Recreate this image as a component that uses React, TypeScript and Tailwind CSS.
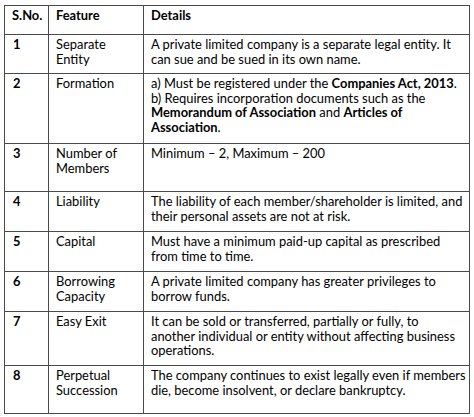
import React from "react";

type Row = { n: string; f: React.ReactNode; d: React.ReactNode; h: number };

const rows: Row[] = [
  {
    n: "1",
    f: <>Separate<br />Entity</>,
    d: <>A private limited company is a separate legal entity. It<br />can sue and be sued in its own name.</>,
    h: 39,
  },
  {
    n: "2",
    f: "Formation",
    d: (
      <>
        a) Must be registered under the <b>Companies Act, 2013</b>.<br />
        b) Requires incorporation documents such as the<br />
        <b>Memorandum of Association</b> and <b>Articles of</b><br />
        <b>Association</b>.
      </>
    ),
    h: 70,
  },
  { n: "3", f: <>Number of<br />Members</>, d: "Minimum – 2, Maximum – 200", h: 48 },
  {
    n: "4",
    f: "Liability",
    d: <>The liability of each member/shareholder is limited, and<br />their personal assets are not at risk.</>,
    h: 40,
  },
  {
    n: "5",
    f: "Capital",
    d: <>Must have a minimum paid-up capital as prescribed<br />from time to time.</>,
    h: 40,
  },
  {
    n: "6",
    f: <>Borrowing<br />Capacity</>,
    d: <>A private limited company has greater privileges to<br />borrow funds.</>,
    h: 40,
  },
  {
    n: "7",
    f: "Easy Exit",
    d: <>It can be sold or transferred, partially or fully, to<br />another individual or entity without affecting business<br />operations.</>,
    h: 54,
  },
  {
    n: "8",
    f: <>Perpetual<br />Succession</>,
    d: <>The company continues to exist legally even if members<br />die, become insolvent, or declare bankruptcy.</>,
    h: 48,
  },
];

export default function App() {
  return (
    <div
      className="w-[474px] h-[417px] bg-white pt-[5px] pl-[4px] text-black"
      style={{ fontFamily: "Lato, 'Open Sans', sans-serif" }}
    >
      <table className="border-collapse w-[465px] table-fixed text-[12.9px] leading-[14.5px]">
        <colgroup>
          <col className="w-[44px]" />
          <col className="w-[95px]" />
          <col className="w-[326px]" />
        </colgroup>
        <tbody>
          <tr className="h-[29px]">
            <td className="border-[1.5px] border-[#4a4a4a] align-top pt-[2px] pl-[7px] font-bold whitespace-nowrap">S.No.</td>
            <td className="border-[1.5px] border-[#4a4a4a] align-top pt-[2px] pl-[7px] font-bold whitespace-nowrap">Feature</td>
            <td className="border-[1.5px] border-[#4a4a4a] align-top pt-[2px] pl-[7px] font-bold whitespace-nowrap">Details</td>
          </tr>
          {rows.map((r) => (
            <tr key={r.n} style={{ height: r.h }}>
              <td className="border-[1.5px] border-[#4a4a4a] align-top pt-[2px] pl-[8px] font-bold">{r.n}</td>
              <td className="border-[1.5px] border-[#4a4a4a] align-top pt-[2px] pl-[7px] whitespace-nowrap">{r.f}</td>
              <td className="border-[1.5px] border-[#4a4a4a] align-top pt-[2px] pl-[7px] whitespace-nowrap">{r.d}</td>
            </tr>
          ))}
        </tbody>
      </table>
    </div>
  );
}
